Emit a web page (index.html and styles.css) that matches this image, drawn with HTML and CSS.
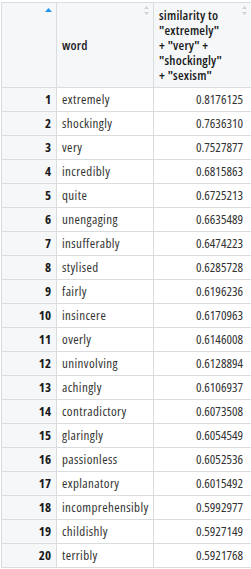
FILE: index.html
```html
<!DOCTYPE html>
<html>
<head>
<meta charset="utf-8">
<link rel="stylesheet" href="styles.css">
</head>
<body>
<div class="viewer">
<table class="grid">
  <colgroup><col class="c-idx"><col class="c-word"><col class="c-sim"></colgroup>
  <thead>
    <tr>
      <th class="h-idx"><svg class="sort sort-asc" width="7" height="4" viewBox="0 0 7 4"><path d="M3.5 0 L7 4 L0 4 Z" fill="#2196f3"/></svg></th>
      <th class="h-word">word<svg class="sort sort-both" width="5" height="10" viewBox="0 0 5 10"><path d="M2.5 0 L5 3 L0 3 Z M0 6 L5 6 L2.5 9 Z" fill="#cfd3d7"/></svg></th>
      <th class="h-sim">similarity to<br>"extremely"<br>+ "very" +<br>"shockingly"<br>+ "sexism"<svg class="sort sort-both" width="5" height="10" viewBox="0 0 5 10"><path d="M2.5 0 L5 3 L0 3 Z M0 6 L5 6 L2.5 9 Z" fill="#cfd3d7"/></svg></th>
    </tr>
  </thead>
  <tbody>
    <tr><td class="idx">1</td><td class="word">extremely</td><td class="num">0.8176125</td></tr>
    <tr><td class="idx">2</td><td class="word">shockingly</td><td class="num">0.7636310</td></tr>
    <tr><td class="idx">3</td><td class="word">very</td><td class="num">0.7527877</td></tr>
    <tr><td class="idx">4</td><td class="word">incredibly</td><td class="num">0.6815863</td></tr>
    <tr><td class="idx">5</td><td class="word">quite</td><td class="num">0.6725213</td></tr>
    <tr><td class="idx">6</td><td class="word">unengaging</td><td class="num">0.6635489</td></tr>
    <tr><td class="idx">7</td><td class="word">insufferably</td><td class="num">0.6474223</td></tr>
    <tr><td class="idx">8</td><td class="word">stylised</td><td class="num">0.6285728</td></tr>
    <tr><td class="idx">9</td><td class="word">fairly</td><td class="num">0.6196236</td></tr>
    <tr><td class="idx">10</td><td class="word">insincere</td><td class="num">0.6170963</td></tr>
    <tr><td class="idx">11</td><td class="word">overly</td><td class="num">0.6146008</td></tr>
    <tr><td class="idx">12</td><td class="word">uninvolving</td><td class="num">0.6128894</td></tr>
    <tr><td class="idx">13</td><td class="word">achingly</td><td class="num">0.6106937</td></tr>
    <tr><td class="idx">14</td><td class="word">contradictory</td><td class="num">0.6073508</td></tr>
    <tr><td class="idx">15</td><td class="word">glaringly</td><td class="num">0.6054549</td></tr>
    <tr><td class="idx">16</td><td class="word">passionless</td><td class="num">0.6052536</td></tr>
    <tr><td class="idx">17</td><td class="word">explanatory</td><td class="num">0.6015492</td></tr>
    <tr><td class="idx">18</td><td class="word">incomprehensibly</td><td class="num">0.5992977</td></tr>
    <tr><td class="idx">19</td><td class="word">childishly</td><td class="num">0.5927149</td></tr>
    <tr><td class="idx">20</td><td class="word">terribly</td><td class="num">0.5921768</td></tr>
  </tbody>
</table>
</div>
</body>
</html>
```
FILE: styles.css
```css
html, body {
  margin: 0;
  padding: 0;
  background: #ffffff;
}
.viewer {
  padding: 2px 0 0 1px;
}
.grid {
  border-collapse: collapse;
  table-layout: fixed;
  width: 250px;
  font-family: "Open Sans", "Liberation Sans", Arial, sans-serif;
  font-stretch: 75%;
  font-size: 13px;
  color: #333333;
}
.c-idx { width: 55px; }
.c-word { width: 97px; }
.c-sim { width: 98px; }
.grid th, .grid td {
  border: 1px solid #dadde0;
  padding: 0;
}
.grid th {
  position: relative;
  background: #f5f7f9;
  color: #1a1a1a;
  font-weight: 600;
  letter-spacing: 0.2px;
  text-align: left;
  vertical-align: middle;
  line-height: 15px;
  height: 85px;
  padding: 1px 12px 0 5px;
  box-sizing: border-box;
}
.sort {
  position: absolute;
  display: block;
}
.sort-asc {
  top: 5px;
  right: 4px;
}
.sort-both {
  top: 3px;
  right: 4px;
}
.grid td {
  height: 23px;
  line-height: 23px;
  white-space: nowrap;
}
.idx {
  background: #f5f7f9;
  font-weight: 700;
  color: #1a1a1a;
  text-align: right;
  padding-right: 5px !important;
}
.word {
  letter-spacing: 0.4px;
  padding-left: 5px !important;
}
.num {
  text-align: right;
  padding-right: 8px !important;
}
```
